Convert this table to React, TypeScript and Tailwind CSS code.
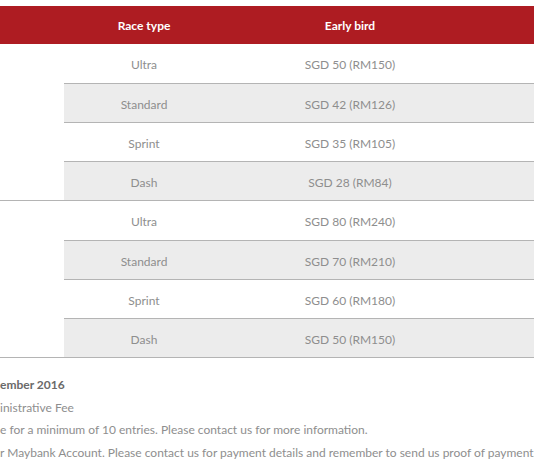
import React from 'react'

type Row = { race: string; price: string }

const groups: { name: string; rows: Row[] }[] = [
  {
    name: 'Singaporean',
    rows: [
      { race: 'Ultra', price: 'SGD 50 (RM150)' },
      { race: 'Standard', price: 'SGD 42 (RM126)' },
      { race: 'Sprint', price: 'SGD 35 (RM105)' },
      { race: 'Dash', price: 'SGD 28 (RM84)' }
    ]
  },
  {
    name: 'Foreigner',
    rows: [
      { race: 'Ultra', price: 'SGD 80 (RM240)' },
      { race: 'Standard', price: 'SGD 70 (RM210)' },
      { race: 'Sprint', price: 'SGD 60 (RM180)' },
      { race: 'Dash', price: 'SGD 50 (RM150)' }
    ]
  }
]

const App = () => {
  return (
    <div
      className="h-[462px] w-[534px] overflow-hidden bg-white text-[12px] text-[#8e8e8e]"
      style={{ fontFamily: 'Lato, "Open Sans", sans-serif' }}
    >
      {/* table, the category column sits off the left edge */}
      <div className="-ml-[100px] w-[634px] pt-[6px]">
        <div className="flex h-[38px] items-center bg-[#ae1c22] font-bold text-white">
          <div className="w-[164px]" />
          <div className="w-[160px] pt-px text-center">Race type</div>
          <div className="w-[252px] pt-px text-center">Early bird</div>
        </div>
        {groups.map(group => (
          <div key={group.name} className="flex border-b border-[#b4b4b4]">
            <div className="w-[164px]" />
            <div className="flex flex-1 flex-col">
              {group.rows.map((row, i) => (
                <div
                  key={row.race}
                  className={
                    'flex items-center pt-[3px] ' +
                    (i % 2 === 1 ? 'bg-[#ececec] ' : 'bg-white ') +
                    (i === 0 ? 'h-[40px] border-b border-[#b4b4b4]' : i < 3 ? 'h-[39px] border-b border-[#b4b4b4]' : 'h-[38px]')
                  }
                >
                  <div className="w-[160px] text-center">{row.race}</div>
                  <div className="w-[252px] text-center">{row.price}</div>
                </div>
              ))}
            </div>
          </div>
        ))}
      </div>

      {/* notes */}
      <div className="mt-[16px] whitespace-nowrap leading-[22.5px]">
        <div className="font-bold text-[#6a6a6a]">ember 2016</div>
        <div>inistrative Fee</div>
        <div>e for a minimum of 10 entries. Please contact us for more information.</div>
        <div>r Maybank Account. Please contact us for payment details and remember to send us proof of payment.</div>
      </div>
    </div>
  )
}

export default App
